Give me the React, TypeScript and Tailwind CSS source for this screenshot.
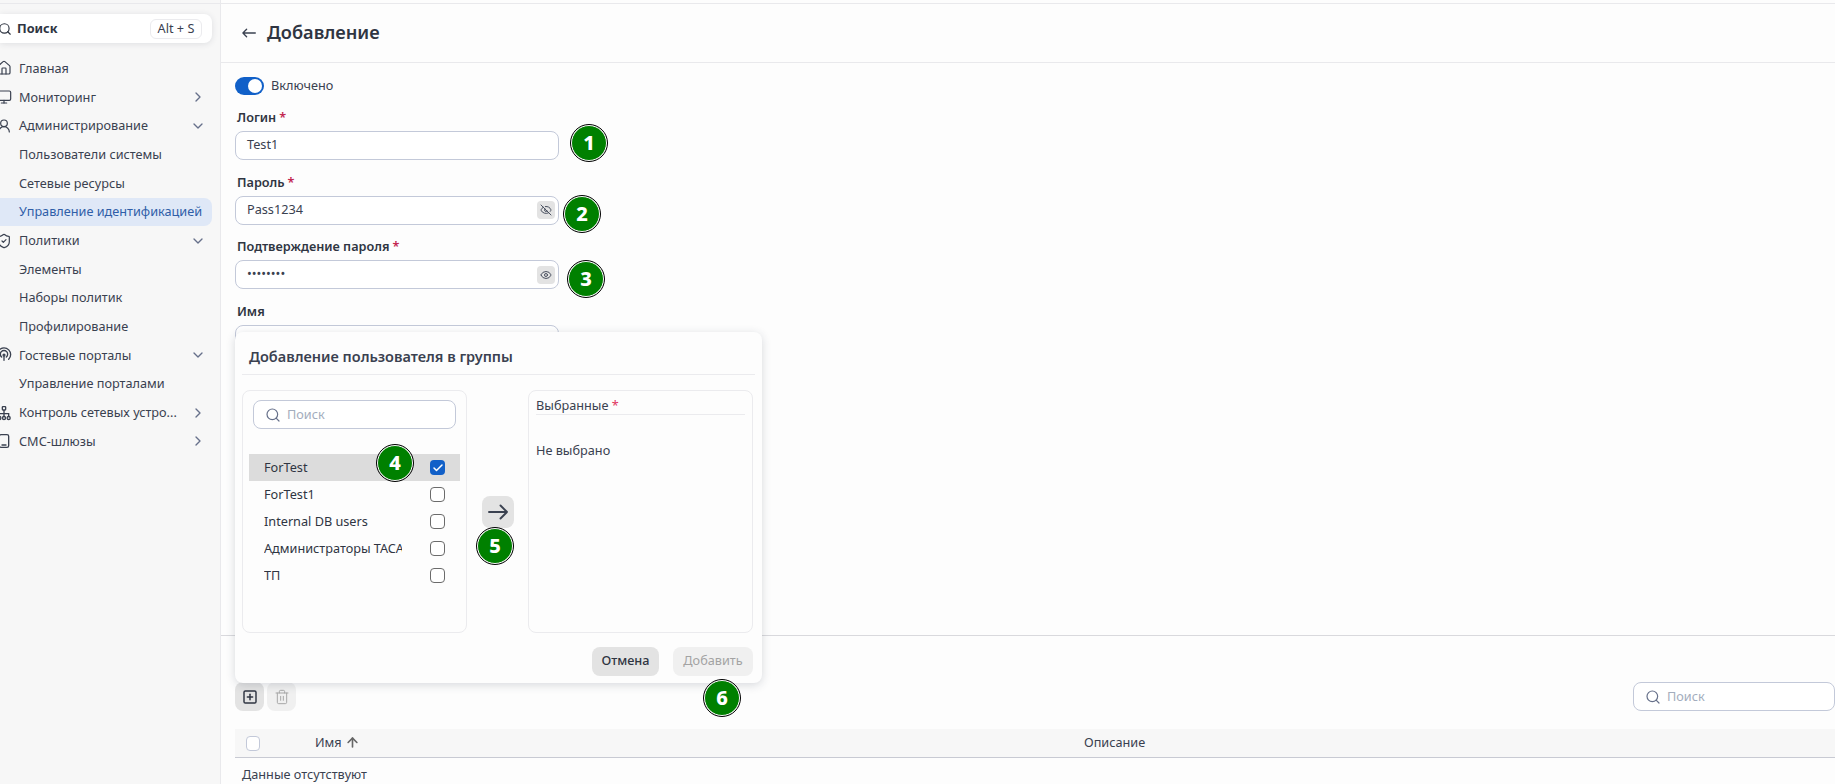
import {
  ArrowUp,
  Check,
  ChevronDown,
  ChevronRight,
  Eye,
  EyeOff,
  House,
  Monitor,
  Search,
  ShieldCheck,
  SquarePlus,
  Trash2,
  UserRound,
} from "lucide-react";
import type { ReactNode } from "react";

function PortalIcon() {
  return (
    <svg width="16" height="16" viewBox="0 0 24 24" fill="none" stroke="currentColor" strokeWidth="2" strokeLinecap="round">
      <path d="M5 18.5a10 10 0 1 1 14 0" />
      <path d="M8.5 15a5.5 5.5 0 1 1 7 0" />
      <circle cx="12" cy="12" r="1.4" />
      <path d="M12 14v6" />
    </svg>
  );
}

function TreeIcon() {
  return (
    <svg width="16" height="16" viewBox="0 0 24 24" fill="none" stroke="currentColor" strokeWidth="2">
      <rect x="9.5" y="2.5" width="5" height="5" rx="1" />
      <path d="M12 7.5V13M5 17v-4h14v4M12 13v4" />
      <circle cx="5" cy="19.5" r="2.3" />
      <circle cx="12" cy="19.5" r="2.3" />
      <circle cx="19" cy="19.5" r="2.3" />
    </svg>
  );
}

function PhoneIcon() {
  return (
    <svg width="16" height="16" viewBox="0 0 24 24" fill="none" stroke="currentColor" strokeWidth="2" strokeLinecap="round">
      <rect x="5" y="2.5" width="14" height="19" rx="2.5" />
      <path d="M9 18h6" />
    </svg>
  );
}

function BackArrow() {
  return (
    <svg width="14" height="10" viewBox="0 0 14 10" fill="none" stroke="currentColor" strokeWidth="1.3" strokeLinecap="round" strokeLinejoin="round">
      <path d="M13.3 5H.9M4.6 1.2.9 5l3.7 3.8" />
    </svg>
  );
}

function ForwardArrow() {
  return (
    <svg width="20" height="16" viewBox="0 0 20 16" fill="none" stroke="currentColor" strokeWidth="1.9" strokeLinecap="round" strokeLinejoin="round">
      <path d="M1 8h18M12.5 1.5 19 8l-6.500 6.500" />
    </svg>
  );
}

type NavItem = {
  label: string;
  icon?: ReactNode;
  arrow?: "right" | "down";
  active?: boolean;
};

const navItems: NavItem[] = [
  { label: "Главная", icon: <House size={16} strokeWidth={1.8} /> },
  { label: "Мониторинг", icon: <Monitor size={16} strokeWidth={1.8} />, arrow: "right" },
  { label: "Администрирование", icon: <UserRound size={16} strokeWidth={1.8} />, arrow: "down" },
  { label: "Пользователи системы" },
  { label: "Сетевые ресурсы" },
  { label: "Управление идентификацией", active: true },
  { label: "Политики", icon: <ShieldCheck size={16} strokeWidth={1.8} />, arrow: "down" },
  { label: "Элементы" },
  { label: "Наборы политик" },
  { label: "Профилирование" },
  { label: "Гостевые порталы", icon: <PortalIcon />, arrow: "down" },
  { label: "Управление порталами" },
  { label: "Контроль сетевых устро...", icon: <TreeIcon />, arrow: "right" },
  { label: "СМС-шлюзы", icon: <PhoneIcon />, arrow: "right" },
];

const groups = ["ForTest", "ForTest1", "Internal DB users", "Администраторы TACACS", "ТП"];

function Marker({ n, className }: { n: number; className: string }) {
  return (
    <div
      className={`absolute z-30 flex h-[36px] w-[36px] items-center justify-center rounded-full border border-white bg-[#008000] text-[20px] font-extrabold text-white outline outline-1 outline-black ${className}`}
    >
      {n}
    </div>
  );
}

function Field({
  label,
  value,
  required,
  eye,
}: {
  label: string;
  value?: string;
  required?: boolean;
  eye?: ReactNode;
}) {
  return (
    <div className="flex flex-col">
      <div className="ml-[2px] h-[23px] text-[12.7px] leading-[18px] font-semibold text-[#2f3542]">
        {label}
        {required ? <span className="ml-[3px] text-[#c2274f]">*</span> : null}
      </div>
      <div className="flex h-[29px] w-[324px] items-center justify-between rounded-[8px] border border-[#c3c9d9] bg-white pr-[3px] pl-[11px] text-[12.7px] text-[#3a4150]">
        <span className="-mt-[2px]">{value}</span>
        {eye ? (
          <span className="flex h-[18px] w-[18px] items-center justify-center rounded-[4px] bg-[#e3e3e3] text-[#4a5160]">
            {eye}
          </span>
        ) : null}
      </div>
    </div>
  );
}

function SearchBox({ className }: { className: string }) {
  return (
    <div
      className={`flex h-[29px] items-center rounded-[8px] border border-[#c3c9d9] bg-white pl-[11px] text-[12.7px] text-[#a3adbd] ${className}`}
    >
      <Search size={16} strokeWidth={1.8} className="mr-[6px] text-[#66708a]" />
      Поиск
    </div>
  );
}

export default function App() {
  return (
    <div className="relative flex h-[784px] w-[1835px] overflow-hidden bg-[#fdfdfd] font-['Noto_Sans',sans-serif] text-[12.7px] text-[#3a4150]">
      <aside className="w-[221px] shrink-0 border-r border-[#e9e9ec] bg-[#f7f7f7] pt-[3px]">
        <div className="h-px bg-[#e9e9ec]" />
        <div className="mt-[10px] flex h-[29px] w-[212px] items-center rounded-r-[8px] bg-white pr-[10px] shadow-[0_1px_6px_rgba(40,50,70,0.12)]">
          <Search size={14} className="-ml-[2px] text-[#2f3542]" />
          <span className="ml-[5px] font-bold text-[#2f3542]">Поиск</span>
          <span className="ml-auto flex h-[20px] w-[52px] items-center justify-center rounded-[6px] border border-[#ebebee] text-[#3a4150]">
            Alt + S
          </span>
        </div>
        <nav className="mt-[11.100px] flex flex-col">
          {navItems.map((item) => (
            <div
              key={item.label}
              className={`flex h-[28.700px] w-[212px] items-center rounded-r-[8px] pr-[6px] whitespace-nowrap ${
                item.active ? "bg-[#dfe8f7] text-[#2f5ea8]" : ""
              }`}
            >
              <span className="-ml-[4px] flex w-[23px] shrink-0 text-[#3a4150]">{item.icon}</span>
              <span>{item.label}</span>
              {item.arrow === "right" ? <ChevronRight size={16} className="ml-auto text-[#66708a]" /> : null}
              {item.arrow === "down" ? <ChevronDown size={16} className="ml-auto text-[#66708a]" /> : null}
            </div>
          ))}
        </nav>
      </aside>

      <main className="flex min-w-0 flex-1 flex-col pt-[3px]">
        <div className="h-px bg-[#e9e9ec]" />
        <header className="flex h-[59px] items-center border-b border-[#e9e9ec] pl-[21px]">
          <span className="flex text-[#3a4150]">
            <BackArrow />
          </span>
          <h1 className="ml-[11px] text-[18.2px] font-semibold text-[#2f3542]">Добавление</h1>
        </header>

        <div className="flex flex-col pl-[14px]">
          <div className="mt-[14px] flex h-[18px] items-center">
            <div className="flex h-[18px] w-[29px] items-center justify-end rounded-full bg-[#1160c8] pr-[2px]">
              <div className="h-[14px] w-[14px] rounded-full bg-white" />
            </div>
            <span className="ml-[7px]">Включено</span>
          </div>
          <div className="mt-[13px] flex flex-col gap-[12.7px]">
            <Field label="Логин" value="Test1" required />
            <Field label="Пароль" value="Pass1234" required eye={<EyeOff size={12} />} />
            <Field label="Подтверждение пароля" value="••••••••" required eye={<Eye size={12} />} />
            <Field label="Имя" />
          </div>
        </div>

        <div className="mt-[281px] h-px bg-[#d9d9dd]" />
        <div className="mt-[46px] flex items-center pl-[14px]">
          <button className="flex h-[29px] w-[29px] items-center justify-center rounded-[8px] bg-[#e3e3e3] text-[#2f3542]">
            <SquarePlus size={16} strokeWidth={2.2} />
          </button>
          <button className="ml-[3px] flex h-[29px] w-[29px] items-center justify-center rounded-[8px] bg-[#f0f0f0] text-[#a8a8a8]">
            <Trash2 size={16} strokeWidth={1.5} />
          </button>
          <SearchBox className="ml-auto w-[202px]" />
        </div>
        <div className="mt-[18px] ml-[14px] flex h-[29px] items-center border-b border-[#c8cad3] bg-[#f7f7f7] pl-[11px]">
          <div className="h-[15px] w-[14px] rounded-[4px] border border-[#c3c9d9] bg-white" />
          <span className="ml-[55px] flex w-[769px] items-center gap-[3px] pb-[2px]">
            Имя <ArrowUp size={15} strokeWidth={2.6} className="text-[#666]" />
          </span>
          <span className="pb-[2px]">Описание</span>
        </div>
        <div className="mt-[7px] ml-[21px] leading-[18px]">Данные отсутствуют</div>
      </main>

      <section className="absolute top-[332px] left-[235px] z-20 flex h-[351px] w-[527px] flex-col rounded-[8px] bg-[#fdfdfd] px-[7px] shadow-[0_2px_10px_rgba(40,50,70,0.18)]">
        <h2 className="ml-[7px] flex h-[42px] items-end pb-[6px] text-[14.500px] font-semibold text-[#3a4150]">
          Добавление пользователя в группы
        </h2>
        <div className="h-px w-full bg-[#ebebee]" />
        <div className="mt-[15px] flex h-[243px] justify-between pr-[2px]">
          <div className="w-[225px] rounded-[8px] border border-[#ebebee] px-[6px] pt-[9px]">
            <SearchBox className="mx-[4px] w-[203px]" />
            <ul className="mt-[25px] flex flex-col">
              {groups.map((name, i) => (
                <li
                  key={name}
                  className={`flex h-[27px] items-center justify-between px-[15px] text-[#2f3542] ${
                    i === 0 ? "bg-[#dcdcdc]" : ""
                  }`}
                >
                  <span className="w-[138px] overflow-hidden whitespace-nowrap">{name}</span>
                  {i === 0 ? (
                    <span className="flex h-[15px] w-[15px] items-center justify-center rounded-[4px] bg-[#1160c8] text-white">
                      <Check size={12} strokeWidth={3} />
                    </span>
                  ) : (
                    <span className="h-[15px] w-[15px] rounded-[4px] border border-[#6b6b6b] bg-white" />
                  )}
                </li>
              ))}
            </ul>
          </div>
          <div className="flex items-center">
            <button className="flex h-[32px] w-[32px] items-center justify-center rounded-[8px] bg-[#e3e3e3] text-[#3a4150]">
              <ForwardArrow />
            </button>
          </div>
          <div className="w-[225px] rounded-[8px] border border-[#ebebee] px-[7px] pt-[5px]">
            <div className="h-[19px] border-b border-[#ebebee] leading-[19px]">
              Выбранные <span className="text-[#e0325f]">*</span>
            </div>
            <p className="mt-[26px] leading-[18px]">Не выбрано</p>
          </div>
        </div>
        <div className="mt-[14px] flex justify-end gap-[14px] pr-[2px]">
          <button className="flex h-[29px] w-[67px] items-center justify-center rounded-[8px] bg-[#e3e3e3] pb-[2px] font-medium text-[#2f3542]">
            Отмена
          </button>
          <button className="flex h-[29px] w-[80px] items-center justify-center rounded-[8px] bg-[#f0f0f0] pb-[2px] text-[#a3a3a3]">
            Добавить
          </button>
        </div>
      </section>

      <Marker n={1} className="top-[125px] left-[571px]" />
      <Marker n={2} className="top-[196px] left-[564px]" />
      <Marker n={3} className="top-[261px] left-[568px]" />
      <Marker n={4} className="top-[445px] left-[377px]" />
      <Marker n={5} className="top-[528px] left-[477px]" />
      <Marker n={6} className="top-[680px] left-[704px]" />
    </div>
  );
}
